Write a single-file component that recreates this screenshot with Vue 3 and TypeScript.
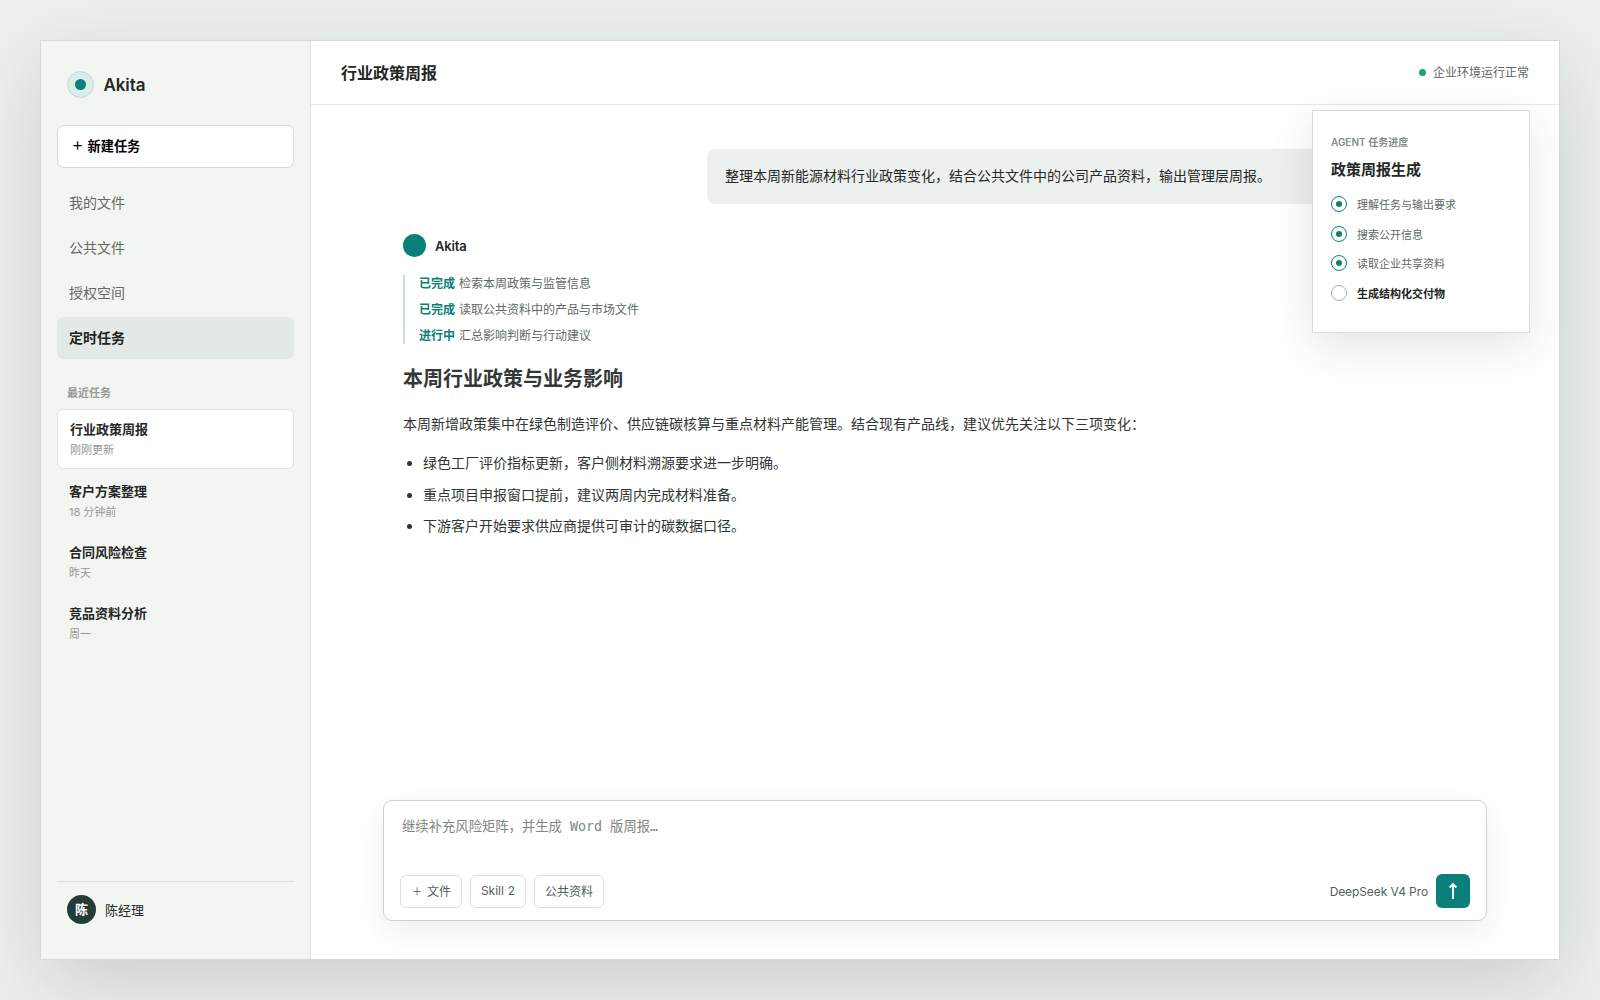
<script setup lang="ts">
interface RecentTask { title: string; time: string }
interface Step { state: string; text: string }
interface Progress { text: string; done: boolean }

const nav: string[] = ['我的文件', '公共文件', '授权空间', '定时任务']
const activeNav = '定时任务'
const recent: RecentTask[] = [
  { title: '行业政策周报', time: '刚刚更新' },
  { title: '客户方案整理', time: '18 分钟前' },
  { title: '合同风险检查', time: '昨天' },
  { title: '竞品资料分析', time: '周一' },
]
const steps: Step[] = [
  { state: '已完成', text: '检索本周政策与监管信息' },
  { state: '已完成', text: '读取公共资料中的产品与市场文件' },
  { state: '进行中', text: '汇总影响判断与行动建议' },
]
const points: string[] = [
  '绿色工厂评价指标更新，客户侧材料溯源要求进一步明确。',
  '重点项目申报窗口提前，建议两周内完成材料准备。',
  '下游客户开始要求供应商提供可审计的碳数据口径。',
]
const progress: Progress[] = [
  { text: '理解任务与输出要求', done: true },
  { text: '搜索公开信息', done: true },
  { text: '读取企业共享资料', done: true },
  { text: '生成结构化交付物', done: false },
]
</script>

<template>
  <div class="page" lang="zh-CN">
    <div class="window">
      <aside class="sidebar">
        <div class="brand"><span class="logo"><i></i></span><strong>Akita</strong></div>
        <button class="new-task"><span class="plus">＋</span> 新建任务</button>
        <nav class="nav">
          <a v-for="item in nav" :key="item" :class="{ active: item === activeNav }">{{ item }}</a>
        </nav>
        <p class="section">最近任务</p>
        <div class="recent">
          <div v-for="(task, i) in recent" :key="task.title" class="task" :class="{ current: i === 0 }">
            <strong>{{ task.title }}</strong>
            <small>{{ task.time }}</small>
          </div>
        </div>
        <div class="user"><span class="avatar">陈</span><span class="name">陈经理</span></div>
      </aside>

      <main class="main">
        <header class="header">
          <h1>行业政策周报</h1>
          <div class="status"><i></i><span>企业环境运行正常</span></div>
        </header>

        <section class="thread">
          <div class="bubble">整理本周新能源材料行业政策变化，结合公共文件中的公司产品资料，输出管理层周报。</div>
          <div class="agent"><i></i><strong>Akita</strong></div>
          <div class="steps">
            <div v-for="step in steps" :key="step.text"><b>{{ step.state }}</b> {{ step.text }}</div>
          </div>
          <h2>本周行业政策与业务影响</h2>
          <p class="lead">本周新增政策集中在绿色制造评价、供应链碳核算与重点材料产能管理。结合现有产品线，建议优先关注以下三项变化：</p>
          <ul class="points">
            <li v-for="point in points" :key="point">{{ point }}</li>
          </ul>
        </section>

        <div class="composer">
          <textarea placeholder="继续补充风险矩阵，并生成 Word 版周报…"></textarea>
          <div class="tools">
            <button class="chip"><span class="plus">＋</span> 文件</button>
            <button class="chip">Skill 2</button>
            <button class="chip">公共资料</button>
            <span class="model">DeepSeek V4 Pro</span>
            <button class="send" aria-label="发送">
              <svg width="34" height="34" viewBox="0 0 34 34" fill="none" stroke="#fff" stroke-width="1.9">
                <path d="M17 25V10M13.6 13.5L17 10.1l3.4 3.4" />
              </svg>
            </button>
          </div>
        </div>

        <aside class="panel">
          <p>AGENT 任务进度</p>
          <h3>政策周报生成</h3>
          <div v-for="row in progress" :key="row.text" class="row" :class="{ done: row.done }">
            <i></i><span>{{ row.text }}</span>
          </div>
        </aside>
      </main>
    </div>
  </div>
</template>

<style>
body { margin: 0; background: #eef1f0; }
</style>

<style scoped>
* { box-sizing: border-box; }
.page {
  height: 1000px;
  padding: 40px;
  overflow: hidden;
  background: #eef1f0;
  color: #252827;
  font-family: Inter, "Noto Sans CJK SC", sans-serif;
  font-size: 14px;
}
h1, h2, h3, p, ul { margin: 0; }
button { font-family: inherit; background: #fff; text-align: left; }
.window {
  display: flex;
  height: 920px;
  border: 1px solid #d5dad8;
  background: #fff;
  box-shadow: 0 24px 80px rgba(31, 48, 43, 0.18);
}
.sidebar {
  display: flex;
  flex-direction: column;
  width: 270px;
  padding: 30px 16px 20px;
  border-right: 1px solid #dfe3e1;
  background: #f3f5f2;
}
.brand { display: flex; align-items: center; gap: 9.5px; height: 27px; padding-left: 10px; font-size: 17px; }
.brand strong { font-weight: 600; letter-spacing: -0.1px; }
.logo {
  display: flex;
  align-items: center;
  justify-content: center;
  width: 27px;
  height: 27px;
  border: 1px solid #b9ddd8;
  border-radius: 50%;
  background: #d9eeea;
}
.logo i { width: 11px; height: 11px; border-radius: 50%; background: #0b7f79; }
.plus { display: inline-block; width: 1em; text-align: center; line-height: 1; transform: translateY(-1px); }
.plus::first-letter { font-size: 0.88em; }
.new-task {
  height: 43px;
  margin-top: 27px;
  padding: 0 14px 2px 13px;
  border: 1px solid #d5dad8;
  border-radius: 7px;
  color: #000;
  font-size: 13.2px;
  font-weight: 600;
}
.nav { display: flex; flex-direction: column; gap: 3px; margin-top: 14px; }
.nav a { height: 42px; padding: 0 12px; border-radius: 6px; color: #646966; line-height: 42px; }
.nav .active { background: #e2e9e6; color: #1d2522; font-weight: 600; }
.section { height: 16px; margin: 26px 10px 8px; color: #959a97; font-size: 11px; font-weight: 600; line-height: 16px; }
.recent { display: flex; flex-direction: column; gap: 3px; }
.task { display: flex; flex-direction: column; gap: 3px; height: 58px; padding: 10px 12px; }
.task.current { height: 60px; border: 1px solid #dfe3e1; border-radius: 6px; background: #fff; }
.task strong { font-size: 13px; font-weight: 600; line-height: 19px; }
.task small { color: #959a97; font-size: 11px; line-height: 16px; }
.user {
  display: flex;
  align-items: center;
  gap: 9px;
  height: 58px;
  margin-top: auto;
  border-top: 1px solid #dadedc;
  padding: 0 0 2px 10px;
  font-size: 13px;
}
.name { padding-bottom: 1px; }
.avatar {
  width: 29px;
  height: 29px;
  border-radius: 50%;
  background: #243c36;
  color: #fff;
  font-weight: 700;
  line-height: 29px;
  text-align: center;
}
.main { position: relative; display: flex; flex: 1; flex-direction: column; background: #fff; }
.header {
  display: flex;
  align-items: center;
  justify-content: space-between;
  height: 64px;
  padding: 0 30px;
  border-bottom: 1px solid #e6e9e8;
}
h1 { padding-bottom: 2px; font-size: 16px; font-weight: 600; }
.status { display: flex; align-items: center; gap: 7px; color: #5c6764; font-size: 12px; }
.status i { width: 7px; height: 7px; border-radius: 50%; background: #22a06b; }
.status span { padding-bottom: 2px; }
.thread { display: flex; flex: 1; flex-direction: column; width: 1064px; margin: 0 auto; padding-top: 44px; }
.bubble {
  align-self: flex-end;
  width: 760px;
  height: 55px;
  padding: 0 18px;
  border-radius: 8px;
  background: #ecf0ef;
  line-height: 53px;
}
.agent { display: flex; align-items: center; gap: 9px; height: 23px; margin-top: 30px; font-size: 13px; }
.agent i { width: 23px; height: 23px; border-radius: 50%; background: #0b7f79; }
.agent strong { font-weight: 600; letter-spacing: -0.15px; }
.steps {
  display: flex;
  flex-direction: column;
  gap: 9px;
  margin-top: 18px;
  padding-left: 14px;
  border-left: 2px solid #cbdcd7;
  color: #5f6966;
  font-size: 12px;
  line-height: 17px;
  word-spacing: 0.6px;
}
.steps b { color: #0b7f79; font-weight: 600; }
h2 { margin-top: 20px; color: #343837; font-size: 20px; font-weight: 600; line-height: 30px; }
.lead { margin-top: 17px; color: #303533; line-height: 25px; }
.points { margin-top: 14.4px; padding-left: 20px; color: #303533; }
.points li { margin-bottom: 6px; line-height: 25.4px; }
.composer {
  display: flex;
  flex-direction: column;
  justify-content: space-between;
  width: 1104px;
  height: 121px;
  margin: 0 auto 38px;
  padding: 16px 16px 12px;
  border: 1px solid #ccd3d0;
  border-radius: 9px;
  background: #fff;
  box-shadow: 0 10px 30px rgba(31, 48, 43, 0.08);
}
textarea {
  height: 40px;
  padding: 0 2px;
  border: 0;
  outline: 0;
  resize: none;
  background: transparent;
  font: 13.333px/19px "DejaVu Sans Mono", "Noto Sans CJK SC", monospace;
}
textarea::placeholder { color: #808682; }
.tools { display: flex; align-items: center; gap: 8px; }
.chip {
  height: 33px;
  padding: 0 10px 1px;
  border: 1px solid #dde1df;
  border-radius: 6px;
  color: #53605c;
  font-size: 12px;
  word-spacing: 0.5px;
}
.model { margin-left: auto; color: #53605c; font-size: 12px; letter-spacing: -0.1px; }
.send { width: 34px; height: 34px; padding: 0; border: 0; border-radius: 6px; background: #0b7f79; }
.send svg { display: block; }
.panel {
  position: absolute;
  top: 69px;
  right: 29px;
  width: 218px;
  height: 223px;
  padding: 23px 18px;
  border: 1px solid #d8dedc;
  background: #fff;
  box-shadow: 0 14px 40px rgba(31, 48, 43, 0.12);
}
.panel p { color: #858c89; font-size: 10px; font-weight: 600; line-height: 16px; }
h3 { margin: 9px 0 8.2px; font-size: 15px; font-weight: 600; line-height: 22px; }
.row { display: flex; align-items: center; gap: 10px; height: 29.6px; color: #5f6966; font-size: 11px; }
.row i {
  display: flex;
  width: 16px;
  height: 16px;
  align-items: center;
  justify-content: center;
  border: 1px solid #a5b3ae;
  border-radius: 50%;
}
.row.done i { border-color: #0b7f79; }
.row.done i::after { content: ""; width: 6px; height: 6px; border-radius: 50%; background: #0b7f79; }
.row:not(.done) { color: #1d2522; font-weight: 600; }
</style>
